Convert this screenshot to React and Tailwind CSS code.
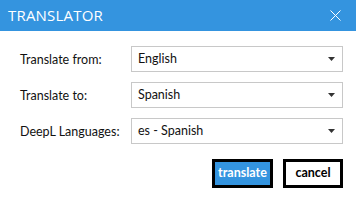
import { useState } from "react";

const rows = [
  { label: "Translate from:", value: "English" },
  { label: "Translate to:", value: "Spanish" },
  { label: "DeepL Languages:", value: "es - Spanish" },
];

function Dropdown({ value }) {
  return (
    <div className="flex h-[26px] w-[212px] items-center justify-between border border-[#c8c8c8] bg-white pl-[6px] pr-[7px]">
      <span className="text-[12.5px] text-[#111111]">{value}</span>
      <svg width="7" height="4" viewBox="0 0 7 4">
        <path d="M0 0h7L3.5 4z" fill="#333333" />
      </svg>
    </div>
  );
}

export default function App() {
  const [open] = useState(true);
  if (!open) return null;
  return (
    <div
      className="h-[202px] w-[356px] bg-white"
      style={{ fontFamily: 'Lato, "Open Sans", sans-serif' }}
    >
      <div className="flex h-[31px] items-center justify-between bg-[#3494df] pl-[8px] pr-[15px]">
        <span
          className="text-[15px] leading-none tracking-[0.2px] text-white"
          style={{ fontFamily: '"Open Sans", sans-serif' }}
        >
          TRANSLATOR
        </span>
        <svg width="11" height="11" viewBox="0 0 11 11">
          <path d="M0.5 0.5l10 10M10.5 0.5l-10 10" stroke="white" strokeWidth="1" />
        </svg>
      </div>
      <div className="flex flex-col gap-[10px] pl-[20px] pr-[13px] pt-[15px]">
        {rows.map((r) => (
          <div key={r.label} className="flex items-center">
            <span className="w-[111px] pt-[2px] text-[12.5px] text-[#111111]">{r.label}</span>
            <Dropdown value={r.value} />
          </div>
        ))}
      </div>
      <div className="mt-[15px] flex justify-end gap-[10px] pr-[13px]">
        <button className="h-[29px] w-[61px] border-[3px] border-black bg-[#3494df] text-[12.5px] font-bold text-white">
          translate
        </button>
        <button className="h-[29px] w-[60px] border-[3px] border-black bg-white text-[12.5px] font-bold text-black">
          cancel
        </button>
      </div>
    </div>
  );
}
